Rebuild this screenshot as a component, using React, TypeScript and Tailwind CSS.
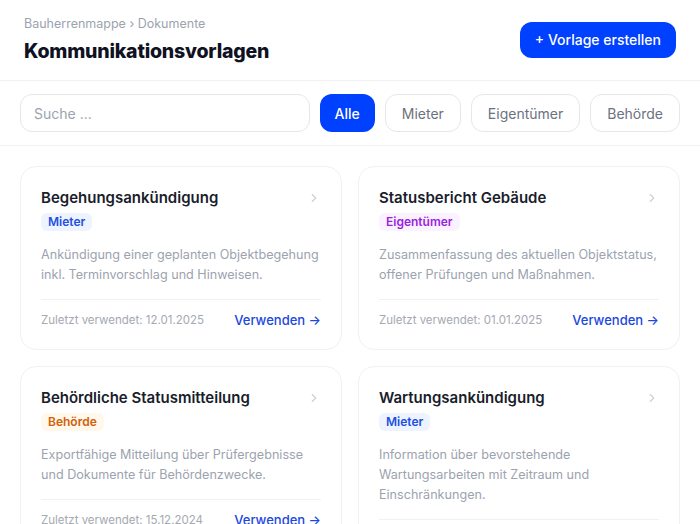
import React from 'react';

const TEMPLATES = [
  {
    title: 'Begehungsankündigung',
    tag: 'Mieter',
    tagClass: 'bg-[#eef4ff] text-[#1d4fe0]',
    text: 'Ankündigung einer geplanten Objektbegehung inkl. Terminvorschlag und Hinweisen.',
    used: '12.01.2025',
  },
  {
    title: 'Statusbericht Gebäude',
    tag: 'Eigentümer',
    tagClass: 'bg-[#faf2ff] text-[#9b1fe0]',
    text: 'Zusammenfassung des aktuellen Objektstatus, offener Prüfungen und Maßnahmen.',
    used: '01.01.2025',
  },
  {
    title: 'Behördliche Statusmitteilung',
    tag: 'Behörde',
    tagClass: 'bg-[#fff8eb] text-[#d2600a]',
    text: 'Exportfähige Mitteilung über Prüfergebnisse und Dokumente für Behördenzwecke.',
    used: '15.12.2024',
  },
  {
    title: 'Wartungsankündigung',
    tag: 'Mieter',
    tagClass: 'bg-[#eef4ff] text-[#1d4fe0]',
    text: 'Information über bevorstehende Wartungsarbeiten mit Zeitraum und Einschränkungen.',
    used: '10.12.2024',
  },
];

const FILTERS = ['Mieter', 'Eigentümer', 'Behörde'];

export default function App() {
  return (
    <div className="min-h-screen bg-white text-[#111827] font-['Inter',sans-serif]">
      <header className="flex items-center justify-between px-6 pt-4 pb-[17px] border-b border-[#f0f1f3]">
        <div>
          <p className="text-[12.5px] leading-4 text-[#9ca3af]">Bauherrenmappe › Dokumente</p>
          <h1 className="mt-[7px] text-[19.5px] leading-6 font-extrabold text-[#0f1222] tracking-[-0.2px]">
            Kommunikationsvorlagen
          </h1>
        </div>
        <button className="h-9 px-[15px] rounded-xl bg-[#0040ff] text-white text-[14px] font-medium">
          + Vorlage erstellen
        </button>
      </header>

      <div className="flex items-center gap-[10px] px-5 py-[13px] border-b border-[#f0f1f3]">
        <input
          placeholder="Suche ..."
          className="flex-1 min-w-0 h-[38px] px-[13px] rounded-xl border border-[#e5e7eb] text-[14px] placeholder:text-[#9ca3af] outline-none"
        />
        <button className="h-[38px] px-[15px] rounded-xl bg-[#0040ff] text-white text-[14px] font-medium">Alle</button>
        {FILTERS.map((f) => (
          <button
            key={f}
            className="h-[38px] px-4 rounded-xl border border-[#e5e7eb] bg-white text-[14px] text-[#6b7280]"
          >
            {f}
          </button>
        ))}
      </div>

      <div className="grid grid-cols-2 items-start gap-4 px-5 pt-5 pb-6">
        {TEMPLATES.map((t) => (
          <div key={t.title} className="flex flex-col rounded-2xl border border-[#f0f1f3] px-5 pt-[19px] pb-[19px]">
            <div className="flex items-center justify-between">
              <h3 className="text-[15px] leading-6 font-semibold text-[#1a1d2b]">{t.title}</h3>
              <svg width="14" height="14" viewBox="0 0 24 24" fill="none" stroke="#cbd0d6" strokeWidth="2" strokeLinecap="round" strokeLinejoin="round">
                <path d="M9 6l6 6-6 6" />
              </svg>
            </div>
            <div className="mt-[3px] flex">
              <span className={`rounded-md px-[7px] py-[1px] text-[12px] leading-4 font-semibold ${t.tagClass}`}>
                {t.tag}
              </span>
            </div>
            <p className="mt-[14px] text-[12.6px] leading-5 text-[#9ca3af]">{t.text}</p>
            <div className="mt-[14px] border-t border-[#f0f1f3] pt-[10px] flex items-center justify-between">
              <span className="text-[11.5px] leading-5 text-[#a5a9b1]">Zuletzt verwendet: {t.used}</span>
              <span className="text-[13px] leading-5 font-medium text-[#1a47e0]">Verwenden →</span>
            </div>
          </div>
        ))}
      </div>
    </div>
  );
}
